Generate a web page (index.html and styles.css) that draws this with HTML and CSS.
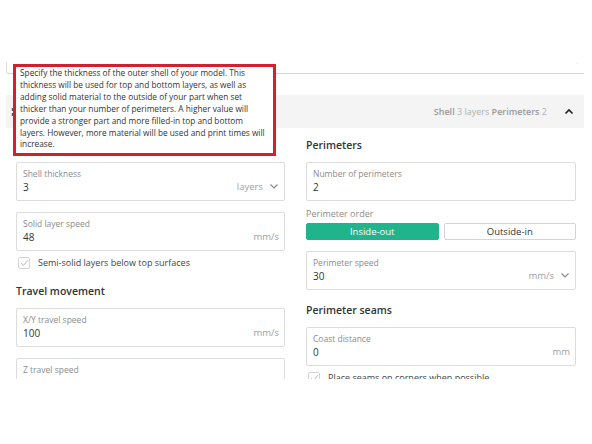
FILE: index.html
```html
<!DOCTYPE html>
<html>
<head>
<meta charset="utf-8">
<link rel="stylesheet" href="styles.css">
</head>
<body>
<div class="page">
  <div class="viewport">
    <div class="top-field">
      <span class="top-label">Infill pattern</span>
      <span class="top-caret">&#709;</span>
    </div>
    <div class="section-bar">
      <svg class="bar-icon" width="8" height="10" viewBox="0 0 8 10"><path d="M1.5 1 L1.5 4 M1.5 6 L1.5 9" stroke="#555" stroke-width="1.4"/><path d="M4 2 L7 5 L4 8" fill="none" stroke="#555" stroke-width="1.3"/></svg>
      <span class="bar-title">Shell</span>
      <span class="bar-summary"><b>Shell</b> 3 layers <b>Perimeters</b> 2</span>
      <svg class="chev-up" width="10" height="7" viewBox="0 0 10 7"><path d="M1.5 5.5 L5 2 L8.5 5.5" fill="none" stroke="#222" stroke-width="1.6"/></svg>
    </div>
    <div class="columns">
      <div class="col">
        <h3 class="heading">Shell</h3>
        <div class="field">
          <div class="field-text">
            <div class="label">Shell thickness</div>
            <div class="value">3</div>
          </div>
          <span class="unit">layers</span>
          <svg class="chev-down" width="10" height="7" viewBox="0 0 10 7"><path d="M1.5 1.5 L5 5 L8.5 1.5" fill="none" stroke="#8a8a8a" stroke-width="1.2"/></svg>
        </div>
        <div class="field">
          <div class="field-text">
            <div class="label">Solid layer speed</div>
            <div class="value">48</div>
          </div>
          <span class="unit">mm/s</span>
        </div>
        <label class="check">
          <span class="box"><svg width="9" height="8" viewBox="0 0 9 8"><path d="M1 4.2 L3.4 6.5 L8 1.2" fill="none" stroke="#b5b5b5" stroke-width="1"/></svg></span>
          Semi-solid layers below top surfaces
        </label>
        <h3 class="heading spaced">Travel movement</h3>
        <div class="field">
          <div class="field-text">
            <div class="label">X/Y travel speed</div>
            <div class="value">100</div>
          </div>
          <span class="unit">mm/s</span>
        </div>
        <div class="field">
          <div class="field-text">
            <div class="label">Z travel speed</div>
            <div class="value">10</div>
          </div>
          <span class="unit">mm/s</span>
        </div>
      </div>
      <div class="col">
        <h3 class="heading">Perimeters</h3>
        <div class="field">
          <div class="field-text">
            <div class="label">Number of perimeters</div>
            <div class="value">2</div>
          </div>
        </div>
        <div class="order-label">Perimeter order</div>
        <div class="toggle">
          <span class="opt active">Inside-out</span>
          <span class="opt">Outside-in</span>
        </div>
        <div class="field">
          <div class="field-text">
            <div class="label">Perimeter speed</div>
            <div class="value">30</div>
          </div>
          <span class="unit">mm/s</span>
          <svg class="chev-down" width="10" height="7" viewBox="0 0 10 7"><path d="M1.5 1.5 L5 5 L8.5 1.5" fill="none" stroke="#8a8a8a" stroke-width="1.2"/></svg>
        </div>
        <h3 class="heading after-field">Perimeter seams</h3>
        <div class="field">
          <div class="field-text">
            <div class="label">Coast distance</div>
            <div class="value">0</div>
          </div>
          <span class="unit">mm</span>
        </div>
        <label class="check">
          <span class="box"><svg width="9" height="8" viewBox="0 0 9 8"><path d="M1 4.2 L3.4 6.5 L8 1.2" fill="none" stroke="#b5b5b5" stroke-width="1"/></svg></span>
          Place seams on corners when possible
        </label>
      </div>
    </div>
  </div>
  <div class="tooltip">Specify the thickness of the outer shell of your model. This thickness will be used for top and bottom layers, as well as adding solid material to the outside of your part when set thicker than your number of perimeters. A higher value will provide a stronger part and more filled-in top and bottom layers. However, more material will be used and print times will increase.</div>
</div>
</body>
</html>
```

FILE: styles.css
```css
html, body {
  margin: 0;
  padding: 0;
  background: #fff;
}
body {
  font-family: "Open Sans", "Noto Sans", sans-serif;
  color: #333;
}
.page {
  position: relative;
  width: 592px;
  height: 444px;
  overflow: hidden;
}
.viewport {
  margin: 50px 8px 0 6px;
  height: 329px;
  overflow: hidden;
}
.top-field {
  height: 11px;
  margin-top: 12px;
  border-left: 1px solid #ddd;
  border-bottom: 1px solid #d6d6d6;
  border-bottom-left-radius: 3px;
  display: flex;
  justify-content: space-between;
  align-items: flex-start;
  padding: 0 6px 0 10px;
  font-size: 8px;
  line-height: 8px;
  color: #e6e6e6;
}
.top-caret {
  color: #ccc;
  font-size: 7px;
}
.section-bar {
  margin-top: 21px;
  height: 33px;
  background: #f4f4f4;
  display: flex;
  align-items: center;
  padding: 0 10px 0 5px;
  font-size: 9px;
  color: #aaa;
}
.bar-icon {
  margin-right: 4px;
}
.bar-title {
  flex: 1;
  font-weight: 600;
  color: #333;
  font-size: 10.5px;
}
.bar-summary b {
  font-weight: 600;
  color: #999;
}
.bar-summary {
  color: #b0b0b0;
}
.chev-up {
  margin-left: 17px;
}
.columns {
  display: grid;
  grid-template-columns: 269px 270px;
  column-gap: 21px;
  padding: 10px 0 0 10px;
}
.col {
  display: flex;
  flex-direction: column;
}
.heading {
  margin: 0 0 10px;
  font-size: 10.5px;
  line-height: 14px;
  font-weight: 600;
  color: #333;
}
.heading.spaced {
  margin-top: 15px;
}
.heading.after-field {
  margin-top: 2px;
}
.field {
  box-sizing: border-box;
  height: 39px;
  border: 1px solid #dcdcdc;
  border-radius: 2px;
  display: flex;
  align-items: flex-end;
  padding: 0 5px 6px 6px;
  margin-bottom: 11px;
}
.field:last-child {
  margin-bottom: 0;
}
.field-text {
  flex: 1;
}
.label {
  font-size: 8.5px;
  line-height: 11px;
  color: #8c8c8c;
  margin-bottom: 1px;
}
.value {
  font-size: 10px;
  line-height: 14px;
  color: #333;
}
.unit {
  font-size: 9.5px;
  line-height: 14px;
  color: #a0a0a0;
}
.chev-down {
  margin: 0 0 4px 6px;
}
.check {
  display: flex;
  align-items: center;
  gap: 8px;
  margin-top: -5px;
  padding-left: 2px;
  font-size: 9px;
  line-height: 12px;
  color: #444;
}
.box {
  box-sizing: border-box;
  width: 12px;
  height: 12px;
  border: 1px solid #d4d4d4;
  border-radius: 2px;
  display: flex;
  align-items: center;
  justify-content: center;
}
.order-label {
  margin-top: -4px;
  font-size: 9px;
  line-height: 12px;
  color: #8c8c8c;
}
.toggle {
  display: grid;
  grid-template-columns: 1fr 1fr;
  gap: 5px;
  margin: 3px 0 11px;
}
.opt {
  box-sizing: border-box;
  height: 17px;
  border: 1px solid #d4d4d4;
  border-radius: 2px;
  display: flex;
  align-items: center;
  justify-content: center;
  font-size: 9.5px;
  color: #333;
}
.opt.active {
  background: #20b48d;
  border-color: #20b48d;
  color: #fff;
}
.tooltip {
  position: absolute;
  left: 13px;
  top: 64px;
  box-sizing: border-box;
  width: 263px;
  height: 92px;
  border: 3px solid #d3202c;
  background: #fff;
  padding: 0 4px;
  font-size: 8.3px;
  line-height: 11.9px;
  color: #333;
}
```
